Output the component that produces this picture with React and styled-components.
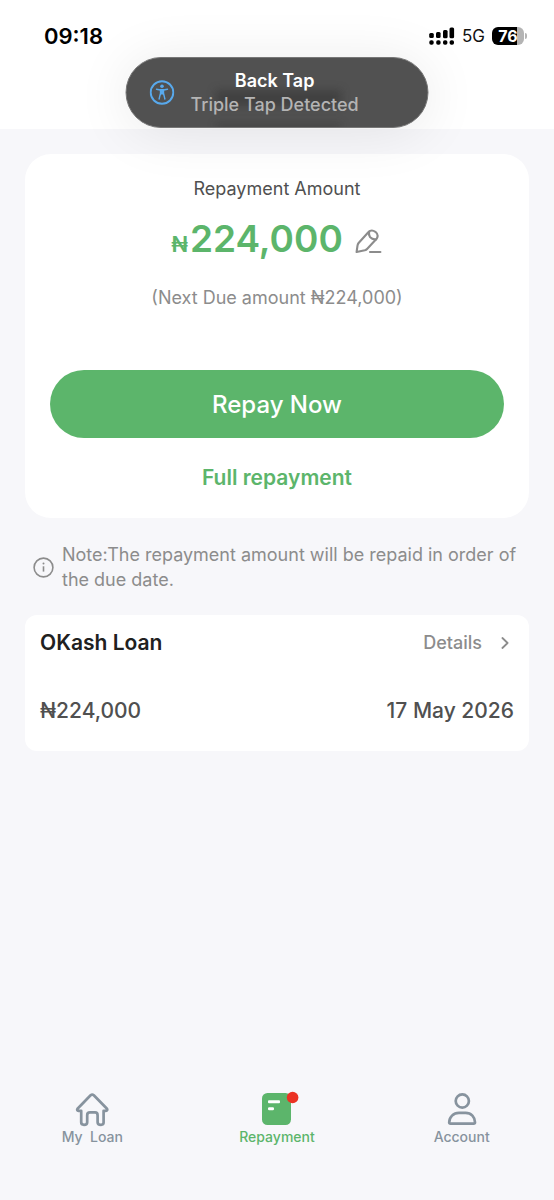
import React from "react";
import styled, { createGlobalStyle } from "styled-components";

const GlobalStyle = createGlobalStyle`
  *, *::before, *::after { box-sizing: border-box; }
  body {
    margin: 0;
    background: #f7f7fa;
    font-family: Inter, "Liberation Sans", sans-serif;
    color: #202020;
  }
  button { font-family: inherit; border: 0; padding: 0; background: none; cursor: pointer; }
  h1, h2, p { margin: 0; }
  svg { display: block; flex: none; }
`;

const green = "#5cb56b";

const Screen = styled.div`
  position: relative;
  display: flex;
  flex-direction: column;
  min-height: 100vh;
`;

const Header = styled.header`
  background: #fff;
  height: 129px;
`;

const StatusBar = styled.div`
  display: flex;
  justify-content: space-between;
  align-items: center;
  padding: 20px 27px 0 44px;
`;

const Clock = styled.time`
  font-size: 22px;
  line-height: 32px;
  font-weight: 600;
  color: #000;
`;

const StatusIcons = styled.div`
  display: flex;
  align-items: center;
  gap: 7px;
`;

const Network = styled.span`
  font-size: 17px;
  line-height: 24px;
  color: #111;
`;

const BatteryWrap = styled.div`
  display: flex;
  align-items: center;
  gap: 1px;
`;

const Battery = styled.div`
  width: 32px;
  height: 18px;
  border-radius: 6px;
  background: linear-gradient(to right, #000 78%, #b4b4b4 78%);
  color: #fff;
  font-size: 16px;
  line-height: 18px;
  font-weight: 700;
  text-align: center;
`;

const BatteryTip = styled.span`
  width: 2px;
  height: 6px;
  border-radius: 0 2px 2px 0;
  background: #b4b4b4;
`;

const Toast = styled.div`
  position: absolute;
  z-index: 2;
  top: 57px;
  left: 50%;
  transform: translateX(-50%);
  width: 303px;
  height: 71px;
  border-radius: 36px;
  border: 1px solid #777;
  background: #515151;
  box-shadow: 0 4px 56px rgba(0, 0, 0, 0.09);
  overflow: hidden;
`;

const ToastBody = styled.div`
  position: relative;
  display: flex;
  align-items: center;
  gap: 16px;
  height: 100%;
  padding-left: 23px;
`;

const ToastText = styled.div`
  display: flex;
  flex-direction: column;
  align-items: center;
  font-size: 18px;
  line-height: 24px;
  font-weight: 500;
  color: #b4b4b4;
`;

const ToastTitle = styled.strong`
  font-weight: 600;
  color: #fff;
`;

const Smudge = styled.span`
  position: absolute;
  left: 89px;
  top: ${(p) => p.$top}px;
  width: 126px;
  height: ${(p) => p.$height}px;
  background: rgba(30, 30, 30, 0.32);
  filter: blur(4px);
`;

const Main = styled.main`
  flex: 1;
  padding: 25px 25px 0;
`;

const AmountCard = styled.section`
  display: flex;
  flex-direction: column;
  align-items: center;
  border-radius: 26px;
  padding: 23px 25px 24px;
  background: #fff;
`;

const CardTitle = styled.h1`
  font-size: 18px;
  line-height: 24px;
  font-weight: 400;
  color: #505050;
`;

const AmountRow = styled.div`
  display: flex;
  align-items: center;
  gap: 12px;
  margin-top: 14px;
`;

const Amount = styled.div`
  display: flex;
  align-items: baseline;
  gap: 2px;
  font-size: 37px;
  line-height: 48px;
  font-weight: 600;
  color: ${green};
`;

const Currency = styled.span`
  font-size: 22px;
`;

const DueText = styled.p`
  margin-top: 18px;
  font-size: 18px;
  line-height: 24px;
  color: #8c8c8c;
`;

const PrimaryButton = styled.button`
  align-self: stretch;
  height: 68px;
  margin-top: 60px;
  border-radius: 34px;
  background: ${green};
  color: #fff;
  font-size: 24px;
  font-weight: 500;
`;

const TextButton = styled.button`
  margin-top: 24px;
  font-size: 21px;
  line-height: 32px;
  font-weight: 600;
  color: ${green};
`;

const Note = styled.div`
  display: flex;
  align-items: center;
  gap: 8px;
  padding: 24px 8px 23px;
  font-size: 18px;
  line-height: 25px;
  color: #8c8c8c;
`;

const LoanCard = styled.section`
  display: flex;
  flex-direction: column;
  gap: 36px;
  border-radius: 12px;
  padding: 12px 15px 24px;
  background: #fff;
`;

const LoanRow = styled.div`
  display: flex;
  align-items: center;
  justify-content: space-between;
  font-size: 21px;
  line-height: 32px;
  font-weight: 500;
  color: #505050;
`;

const LoanTitle = styled.h2`
  font-size: 21px;
  font-weight: 600;
  color: #202020;
`;

const DetailsLink = styled.a`
  display: flex;
  align-items: center;
  gap: 19px;
  padding-right: 5px;
  font-size: 18px;
  font-weight: 500;
  color: #8c8c8c;
  text-decoration: none;
`;

const TabBar = styled.nav`
  display: grid;
  grid-template-columns: repeat(3, 1fr);
  padding: 12px 0 54px;
`;

const Tab = styled.a`
  display: flex;
  flex-direction: column;
  align-items: center;
  font-size: 14px;
  line-height: 18px;
  font-weight: 500;
  white-space: pre;
  text-decoration: none;
  color: ${(p) => (p.$active ? green : "#87939e")};
`;

function SignalIcon() {
  return (
    <svg width="26" height="18" viewBox="0 0 26 18" fill="#000" aria-hidden="true">
      <rect x="0.2" y="6" width="4.6" height="5" rx="1.5" />
      <rect x="7" y="5" width="4.6" height="6" rx="1.5" />
      <rect x="14" y="3" width="4.6" height="8.2" rx="1.5" />
      <rect x="20.5" y="0.6" width="4.6" height="10.6" rx="1.5" />
      <rect x="0.3" y="13.3" width="4.4" height="4.5" rx="1.8" />
      <rect x="7.2" y="13.3" width="4.4" height="4.5" rx="1.8" />
      <rect x="14" y="13.3" width="4.4" height="4.5" rx="1.8" />
      <rect x="20.6" y="13.3" width="4.4" height="4.5" rx="1.8" />
    </svg>
  );
}

function AccessibilityIcon() {
  return (
    <svg width="25" height="25" viewBox="0 0 25 25" fill="none" stroke="#58a9ec" aria-hidden="true">
      <circle cx="12.5" cy="12.5" r="11.3" strokeWidth="1.9" />
      <circle cx="12.5" cy="6.2" r="1.8" fill="#58a9ec" stroke="none" />
      <path d="M7 9.2L11 10H14L18 9.2" strokeWidth="1.4" strokeLinecap="round" />
      <path d="M11 9.8H14V13.2L15.4 19M11 9.8V13.2L9.6 19M11.1 14.5L12.5 12.5L13.9 14.5" strokeWidth="1.4" strokeLinecap="round" strokeLinejoin="round" />
      <path d="M11 10H14V13.5H11Z" fill="#58a9ec" stroke="none" />
    </svg>
  );
}

function EditIcon() {
  return (
    <svg width="28" height="26" viewBox="0 1 28 26" fill="none" stroke="#8c8c8c" strokeWidth="2.1" strokeLinecap="round" strokeLinejoin="round" aria-hidden="true">
      <path d="M1.6 24L2.5 17.6Q2.7 16.2 3.6 15L13.3 4.2Q16.4 1 20.4 3.8Q24.2 7 21.6 10.8L12.3 20.7Q11.2 21.9 9.8 22.3Z" />
      <path d="M14.2 3.6Q12.6 10.6 20.8 11.6" />
      <path d="M15 24H25.4" />
    </svg>
  );
}

function InfoIcon() {
  return (
    <svg width="21" height="21" viewBox="0 0 21 21" fill="none" stroke="#8c8c8c" aria-hidden="true">
      <circle cx="10.5" cy="10.5" r="9.4" strokeWidth="1.6" />
      <path d="M10.5 9.3V14.6" strokeWidth="1.6" />
      <circle cx="10.5" cy="6.6" r="1" fill="#8c8c8c" stroke="none" />
    </svg>
  );
}

function ChevronIcon() {
  return (
    <svg width="8" height="12" viewBox="0 0 8 12" fill="none" stroke="#8c8c8c" strokeWidth="1.8" strokeLinecap="round" strokeLinejoin="round" aria-hidden="true">
      <path d="M1.4 1L6.6 6L1.4 11" />
    </svg>
  );
}

function HomeIcon() {
  return (
    <svg width="36" height="38" viewBox="0 0 36 38" fill="none" stroke="#87939e" strokeWidth="2.7" strokeLinejoin="round" strokeLinecap="round" aria-hidden="true">
      <path d="M16.6 5.3Q18.2 4 19.8 5.3L33 18.7Q34 20.5 31.8 20.8H29.6V32.6Q29.6 34.8 27 34.8Q23.6 34.8 23.6 32.2V25.2Q23.6 22.4 21 22.4H16Q13.2 22.4 13.2 25.2V32.2Q13.2 34.8 10 34.8Q7.2 34.8 7.2 32.3V20.8H4.6Q2.4 20.5 3.5 18.7Z" />
    </svg>
  );
}

function RepaymentIcon() {
  return (
    <svg width="44" height="38" viewBox="0 0 44 38" aria-hidden="true">
      <rect x="7" y="3" width="29" height="32" rx="5.5" fill={green} />
      <rect x="13" y="10.2" width="12" height="3" rx="1" fill="#fff" />
      <rect x="13" y="17.2" width="6" height="3" rx="1.2" fill="#fff" />
      <circle cx="37.6" cy="7.5" r="5.8" fill="#eb3223" />
    </svg>
  );
}

function AccountIcon() {
  return (
    <svg width="30" height="38" viewBox="0 0 30 38" fill="none" stroke="#87939e" strokeWidth="2.7" strokeLinejoin="round" aria-hidden="true">
      <circle cx="15.3" cy="11" r="6.6" />
      <path d="M2.2 32.5C2.2 27 6.5 22.8 12 22.8H18.6C24.2 22.8 28 27 28 32.3Q28 33.6 26.6 33.6H3.6Q2.2 33.6 2.2 32.5Z" />
    </svg>
  );
}

export default function App() {
  return (
    <Screen>
      <GlobalStyle />
      <Header>
        <StatusBar>
          <Clock>09:18</Clock>
          <StatusIcons>
            <SignalIcon />
            <Network>5G</Network>
            <BatteryWrap>
              <Battery>76</Battery>
              <BatteryTip />
            </BatteryWrap>
          </StatusIcons>
        </StatusBar>
      </Header>

      <Toast role="status">
        <Smudge $top={32} $height={16} />
        <Smudge $top={66} $height={5} />
        <ToastBody>
          <AccessibilityIcon />
          <ToastText>
            <ToastTitle>Back Tap</ToastTitle>
            <span>Triple Tap Detected</span>
          </ToastText>
        </ToastBody>
      </Toast>

      <Main>
        <AmountCard>
          <CardTitle>Repayment Amount</CardTitle>
          <AmountRow>
            <Amount>
              <Currency>₦</Currency>
              <span>224,000</span>
            </Amount>
            <button type="button" aria-label="Edit amount">
              <EditIcon />
            </button>
          </AmountRow>
          <DueText>(Next Due amount ₦224,000)</DueText>
          <PrimaryButton type="button">Repay Now</PrimaryButton>
          <TextButton type="button">Full repayment</TextButton>
        </AmountCard>

        <Note>
          <InfoIcon />
          <p>Note:The repayment amount will be repaid in order of the due date.</p>
        </Note>

        <LoanCard>
          <LoanRow>
            <LoanTitle>OKash Loan</LoanTitle>
            <DetailsLink href="#details">
              Details
              <ChevronIcon />
            </DetailsLink>
          </LoanRow>
          <LoanRow>
            <span>₦224,000</span>
            <span>17 May 2026</span>
          </LoanRow>
        </LoanCard>
      </Main>

      <TabBar aria-label="Main">
        <Tab href="#loan">
          <HomeIcon />
          {"My  Loan"}
        </Tab>
        <Tab href="#repayment" $active aria-current="page">
          <RepaymentIcon />
          Repayment
        </Tab>
        <Tab href="#account">
          <AccountIcon />
          Account
        </Tab>
      </TabBar>
    </Screen>
  );
}
